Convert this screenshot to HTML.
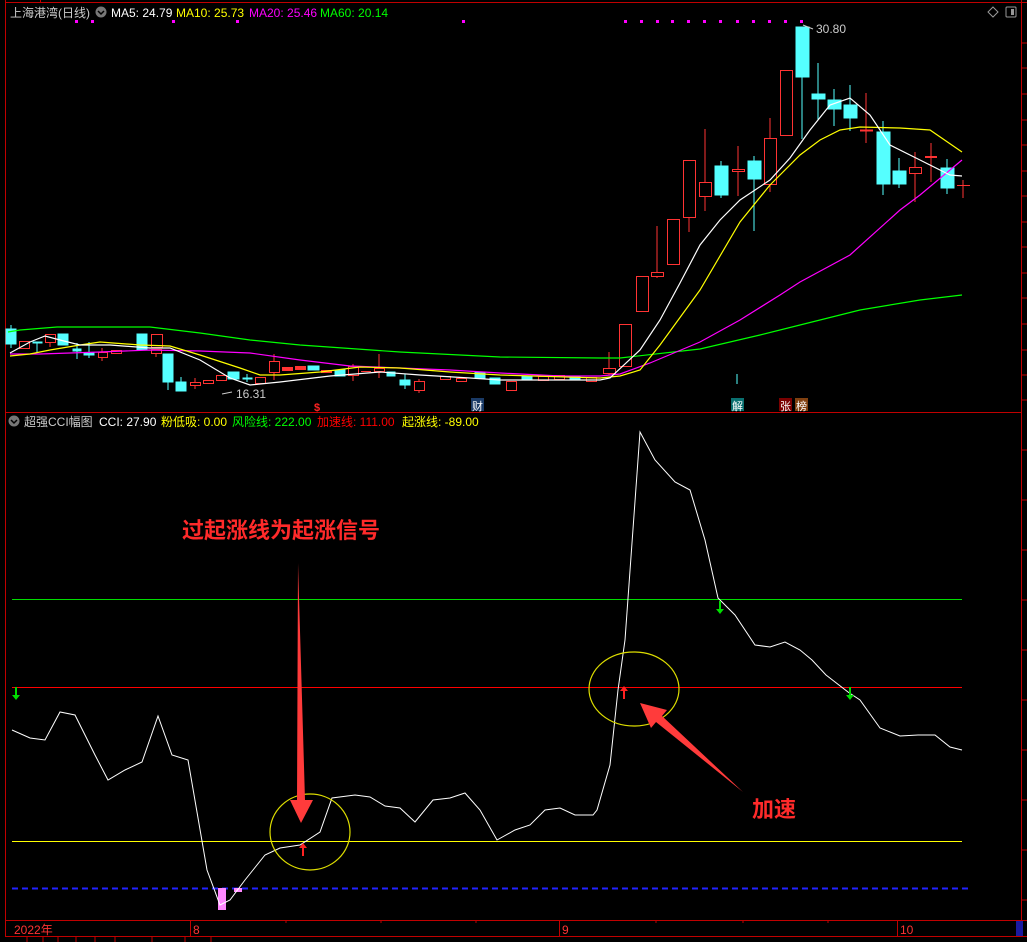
<!DOCTYPE html>
<html><head><meta charset="utf-8"><style>
html,body{margin:0;padding:0;background:#000;width:1027px;height:942px;overflow:hidden}
svg{display:block}
text{font-family:"Liberation Sans","Noto Sans CJK SC",sans-serif}
</style></head><body>
<svg width="1027" height="942" viewBox="0 0 1027 942" xmlns="http://www.w3.org/2000/svg">
<rect width="1027" height="942" fill="#000"/>
<g stroke="#c00000" stroke-width="1" fill="none">
<line x1="5" y1="2.5" x2="1027" y2="2.5"/>
<line x1="5.5" y1="0" x2="5.5" y2="937"/>
<line x1="1021.5" y1="0" x2="1021.5" y2="920"/>
<line x1="5" y1="412.5" x2="1021" y2="412.5"/>
<line x1="5" y1="920.5" x2="1027" y2="920.5"/>
<line x1="5" y1="936.5" x2="1027" y2="936.5"/>
<line x1="190.5" y1="920" x2="190.5" y2="937"/>
<line x1="559.5" y1="920" x2="559.5" y2="937"/>
<line x1="897.5" y1="920" x2="897.5" y2="937"/>
<line x1="40.5" y1="0" x2="40.5" y2="3"/>
</g>
<g stroke="#c00000">
<path d="M1021 43h6M1021 68h6M1021 94h6M1021 120h6M1021 145h6M1021 171h6M1021 196h6M1021 222h6M1021 247h6M1021 273h6M1021 298h6M1021 324h6M1021 350h6M1021 375h6M1021 400h6M1021 450h6M1021 500h6M1021 550h6M1021 600h6M1021 650h6M1021 700h6M1021 750h6M1021 800h6M1021 850h6M1021 900h6"/>
<path d="M286 920v3M381 920v3M476 920v3M656 920v3M743 920v3M828 920v3"/>
</g>
<rect x="1016" y="921" width="7" height="15" fill="#1a1aa0"/>
<text x="10" y="17" font-size="12" fill="#ccc" textLength="80" lengthAdjust="spacingAndGlyphs">上海港湾(日线)</text>
<circle cx="101" cy="12" r="5.5" fill="#777"/><path d="M98 11l3 3 3-3" stroke="#000" fill="none" stroke-width="1.5"/>
<text x="111" y="17" font-size="12" fill="#fff">MA5: 24.79</text>
<text x="176" y="17" font-size="12" fill="#ff0">MA10: 25.73</text>
<text x="249" y="17" font-size="12" fill="#f0f">MA20: 25.46</text>
<text x="320" y="17" font-size="12" fill="#0f0">MA60: 20.14</text>
<g fill="#f0f"><rect x="75" y="20" width="3" height="3"/><rect x="91" y="20" width="3" height="3"/><rect x="172" y="20" width="3" height="3"/><rect x="236" y="20" width="3" height="3"/><rect x="462" y="20" width="3" height="3"/>
<rect x="624" y="20" width="3" height="3"/><rect x="640" y="20" width="3" height="3"/><rect x="656" y="20" width="3" height="3"/><rect x="671" y="20" width="3" height="3"/><rect x="687" y="20" width="3" height="3"/><rect x="703" y="20" width="3" height="3"/><rect x="719" y="20" width="3" height="3"/><rect x="736" y="20" width="3" height="3"/><rect x="752" y="20" width="3" height="3"/><rect x="768" y="20" width="3" height="3"/><rect x="784" y="20" width="3" height="3"/><rect x="800" y="20" width="3" height="3"/></g>
<path d="M993 7l5 5-5 5-5-5z" stroke="#999" fill="none"/>
<rect x="1006" y="7" width="10" height="10" rx="1" stroke="#999" fill="none"/><rect x="1011" y="9" width="3" height="6" fill="#999"/>
<g stroke-width="1">
<g fill="#55ffff" stroke="#55ffff">
<line x1="11" y1="325" x2="11" y2="348"/><rect x="6" y="329" width="10" height="15"/>
<rect x="33" y="342" width="9" height="1"/><line x1="37" y1="342" x2="37" y2="352"/>
<rect x="58" y="334" width="10" height="11"/>
<line x1="77" y1="343" x2="77" y2="359"/><rect x="73" y="349" width="8" height="2"/>
<line x1="89" y1="342" x2="89" y2="358"/><rect x="84" y="353" width="10" height="2"/>
<rect x="137" y="334" width="10" height="16"/>
<line x1="168" y1="354" x2="168" y2="390"/><rect x="163" y="354" width="10" height="28"/>
<line x1="181" y1="377" x2="181" y2="391"/><rect x="176" y="382" width="10" height="9"/>
<rect x="228" y="372" width="11" height="7"/>
<line x1="247" y1="374" x2="247" y2="382"/><rect x="243" y="378" width="9" height="1"/>
<rect x="308" y="366" width="11" height="4"/>
<rect x="335" y="370" width="10" height="6"/>
<rect x="387" y="372" width="8" height="4"/>
<line x1="405" y1="374" x2="405" y2="389"/><rect x="400" y="380" width="10" height="5"/>
<rect x="475" y="372" width="10" height="6"/>
<rect x="490" y="378" width="10" height="6"/>
<rect x="522" y="376" width="10" height="3"/>
<rect x="570" y="377" width="10" height="3"/>
<line x1="737" y1="374" x2="737" y2="384"/>
<line x1="721" y1="161" x2="721" y2="198"/><rect x="715" y="166" width="13" height="29"/>
<line x1="754" y1="156" x2="754" y2="231"/><rect x="748" y="161" width="13" height="18"/>
<line x1="802" y1="27" x2="802" y2="139"/><rect x="796" y="27" width="13" height="50"/>
<line x1="818" y1="63" x2="818" y2="120"/><rect x="812" y="94" width="13" height="5"/>
<line x1="834" y1="89" x2="834" y2="126"/><rect x="828" y="100" width="13" height="9"/>
<line x1="850" y1="85" x2="850" y2="131"/><rect x="844" y="105" width="13" height="13"/>
<line x1="883" y1="121" x2="883" y2="195"/><rect x="877" y="132" width="13" height="52"/>
<line x1="899" y1="158" x2="899" y2="188"/><rect x="893" y="171" width="13" height="13"/>
<line x1="947" y1="159" x2="947" y2="194"/><rect x="941" y="168" width="13" height="20"/>
</g>
<g fill="none" stroke="#ff3333">
<rect x="19.5" y="341.5" width="10" height="7"/>
<line x1="50" y1="334" x2="50" y2="347"/><rect x="45.5" y="334.5" width="10" height="8" fill="#000"/>
<line x1="102" y1="348" x2="102" y2="361"/><rect x="98.5" y="352.5" width="9" height="5" fill="#000"/>
<rect x="111.5" y="350.5" width="10" height="3"/>
<rect x="151.5" y="334.5" width="11" height="13"/>
<line x1="156" y1="349" x2="156" y2="357"/><rect x="151.5" y="349.5" width="10" height="4" fill="#000"/>
<line x1="195" y1="378" x2="195" y2="389"/><rect x="190.5" y="382.5" width="10" height="3" fill="#000"/>
<rect x="203.5" y="380.5" width="10" height="3"/>
<rect x="216.5" y="375.5" width="10" height="5"/>
<rect x="255.5" y="377.5" width="10" height="6"/>
<line x1="274" y1="354" x2="274" y2="380"/><rect x="269.5" y="361.5" width="10" height="11" fill="#000"/>
<rect x="282.5" y="367.5" width="10" height="3" fill="#ff3333"/>
<rect x="295.5" y="366.5" width="10" height="3" fill="#ff3333"/>
<rect x="321.5" y="370.5" width="10" height="2" fill="#ff3333"/>
<line x1="353" y1="364" x2="353" y2="381"/><rect x="348.5" y="366.5" width="10" height="9" fill="#000"/>
<line x1="361" y1="371.5" x2="371" y2="371.5"/>
<line x1="379" y1="354" x2="379" y2="378"/><rect x="374.5" y="368.5" width="10" height="3" fill="#000"/>
<line x1="419" y1="379" x2="419" y2="393"/><rect x="414.5" y="381.5" width="10" height="9" fill="#000"/>
<rect x="440.5" y="376.5" width="10" height="3"/>
<rect x="456.5" y="378.5" width="10" height="3"/>
<rect x="506.5" y="381.5" width="10" height="9"/>
<rect x="538.5" y="376.5" width="10" height="4"/>
<rect x="554.5" y="375.5" width="10" height="4"/>
<rect x="586.5" y="377.5" width="10" height="4"/>
<line x1="609" y1="352" x2="609" y2="375"/><rect x="603.5" y="368.5" width="12" height="5" fill="#000"/>
<rect x="619.5" y="324.5" width="12" height="42"/>
<rect x="636.5" y="276.5" width="12" height="35"/>
<line x1="657" y1="226" x2="657" y2="278"/><rect x="651.5" y="272.5" width="12" height="4" fill="#000"/>
<rect x="667.5" y="219.5" width="12" height="45"/>
<line x1="689" y1="217" x2="689" y2="232"/><rect x="683.5" y="160.5" width="12" height="57"/>
<line x1="705" y1="129" x2="705" y2="211"/><rect x="699.5" y="182.5" width="12" height="14" fill="#000"/>
<line x1="738" y1="146" x2="738" y2="196"/><rect x="732.5" y="169.5" width="12" height="2" fill="#000"/>
<line x1="770" y1="118" x2="770" y2="192"/><rect x="764.5" y="138.5" width="12" height="46" fill="#000"/>
<rect x="780.5" y="70.5" width="12" height="65"/>
<line x1="866" y1="93" x2="866" y2="143"/><line x1="860" y1="130.5" x2="873" y2="130.5" stroke-width="2"/>
<line x1="915" y1="152" x2="915" y2="202"/><rect x="909.5" y="167.5" width="12" height="6" fill="#000"/>
<line x1="931" y1="143" x2="931" y2="182"/><line x1="925" y1="157" x2="937" y2="157" stroke-width="2"/>
<line x1="963" y1="180" x2="963" y2="198"/><line x1="957" y1="185.5" x2="970" y2="185.5"/>
</g>
</g>
<g fill="none" stroke-width="1.2">
<polyline stroke="#00ff00" points="8,332 20,330 57,327 100,327 150,327 200,333 250,340 300,345 400,352 500,357 600,358 620,358 700,349 760,335 800,325 860,310 920,300 962,295"/>
<polyline stroke="#ff00ff" points="10,354 40,354 100,352 150,350 200,351 250,353 300,360 350,366 400,368 450,370 500,373 560,376 600,376 620,374 650,363 700,342 740,320 780,295 800,282 850,255 900,210 920,195 962,160"/>
<polyline stroke="#ffff00" points="10,356 30,354 50,350 80,345 100,342 140,345 170,346 200,355 240,368 260,375 280,375 320,372 360,367 400,368 450,372 500,375 600,378 620,376 640,370 660,345 700,290 740,222 770,185 800,155 820,140 840,130 860,127 900,128 930,130 962,152"/>
<polyline stroke="#ffffff" points="10,353 30,342 45,336 60,340 80,345 110,345 150,348 170,348 200,360 230,378 250,385 280,382 330,376 380,372 420,375 470,378 500,380 600,380 610,378 640,350 660,320 680,283 700,245 720,220 740,200 770,180 790,158 810,130 830,105 850,98 870,115 890,145 920,160 950,175 962,176"/>
</g>
<text x="816" y="33" font-size="12" fill="#ccc">30.80</text>
<path d="M803 25l10 4" stroke="#ccc"/>
<text x="236" y="398" font-size="12" fill="#ccc">16.31</text>
<path d="M222 394l10 -2" stroke="#ccc"/>
<text x="314" y="411" font-size="11" fill="#ff2222" font-weight="bold">$</text>
<rect x="471" y="398" width="13" height="13" fill="#1a3a66"/><text x="472" y="410" font-size="11" fill="#fff">财</text>
<rect x="731" y="398" width="13" height="13" fill="#0a7070"/><text x="732" y="410" font-size="11" fill="#fff">解</text>
<rect x="779" y="398" width="13" height="13" fill="#7a0000"/><text x="780" y="410" font-size="11" fill="#fff">张</text>
<rect x="795" y="398" width="13" height="13" fill="#804010"/><text x="796" y="410" font-size="11" fill="#fff">榜</text>
<circle cx="14" cy="421" r="5.5" fill="#777"/><path d="M11 420l3 3 3-3" stroke="#000" fill="none" stroke-width="1.5"/>
<text x="24" y="426" font-size="12" fill="#ccc">超强CCI幅图</text>
<text x="99" y="426" font-size="12" fill="#fff">CCI: 27.90</text>
<text x="161" y="426" font-size="12" fill="#ff0">粉低吸: 0.00</text>
<text x="232" y="426" font-size="12" fill="#0f0">风险线: 222.00</text>
<text x="317" y="426" font-size="12" fill="#f00">加速线: 111.00</text>
<text x="402" y="426" font-size="12" fill="#ff0">起涨线: -89.00</text>
<line x1="12" y1="599.5" x2="962" y2="599.5" stroke="#00dd00"/>
<line x1="12" y1="687.5" x2="962" y2="687.5" stroke="#ff0000"/>
<line x1="12" y1="841.5" x2="962" y2="841.5" stroke="#ffff00"/>
<line x1="12" y1="888.5" x2="968" y2="888.5" stroke="#2222ff" stroke-width="2" stroke-dasharray="6,4"/>
<rect x="218" y="888" width="8" height="22" fill="#ff88ff"/>
<rect x="234" y="888" width="8" height="4" fill="#ff88ff"/>
<polyline fill="none" stroke="#fff" stroke-width="1" points="12,730 30,738 45,740 60,712 75,715 95,755 108,780 125,770 142,762 158,716 172,755 188,760 207,870 220,905 230,900 245,880 265,855 280,848 300,845 320,832 332,798 355,795 370,797 385,806 400,808 415,822 433,800 450,798 465,793 480,810 497,840 515,830 530,825 545,810 560,808 575,815 593,815 597,810 610,765 618,690 625,640 640,432 655,460 675,482 690,490 705,540 718,598 735,615 755,645 770,647 785,642 800,650 812,660 826,675 848,692 860,700 880,728 900,736 918,735 935,735 950,747 962,750"/>
<g stroke="#ff2222" stroke-width="2" fill="#ff2222"><line x1="303" y1="856" x2="303" y2="846"/><path d="M299 848l4-5 4 5z" stroke="none"/>
<line x1="624" y1="699" x2="624" y2="689"/><path d="M620 691l4-5 4 5z" stroke="none"/></g>
<g stroke="#00dd00" stroke-width="2" fill="#00dd00"><line x1="16" y1="687" x2="16" y2="697"/><path d="M12 695l4 5 4-5z" stroke="none"/>
<line x1="720" y1="601" x2="720" y2="611"/><path d="M716 609l4 5 4-5z" stroke="none"/>
<line x1="850" y1="687" x2="850" y2="697"/><path d="M846 695l4 5 4-5z" stroke="none"/></g>
<ellipse cx="310" cy="832" rx="40" ry="38" fill="none" stroke="#dddd00" stroke-width="1.2"/>
<ellipse cx="634" cy="689" rx="45" ry="37" fill="none" stroke="#dddd00" stroke-width="1.2"/>
<path d="M298 563 L305 800 L313 800 L301 823 L290 800 L297 800 Z" fill="#ff3b3b"/>
<path d="M743 792 L662 716 L667 710 L640 703 L651 728 L656 722 Z" fill="#ff3b3b"/>
<text x="182" y="538" font-size="22" font-weight="bold" fill="#ff2a2a">过起涨线为起涨信号</text>
<text x="752" y="817" font-size="22" font-weight="bold" fill="#ff2a2a">加速</text>
<text x="14" y="934" font-size="12" fill="#ff3333">2022年</text>
<text x="193" y="934" font-size="12" fill="#ff3333">8</text>
<text x="562" y="934" font-size="12" fill="#ff3333">9</text>
<text x="900" y="934" font-size="12" fill="#ff3333">10</text>
<g stroke="#c00000"><path d="M27 937v5M43 937v5M58 937v5M76 937v5M95 937v5M115 937v5M152 937v5M185 937v5M211 937v5"/></g>
</svg>
</body></html>
